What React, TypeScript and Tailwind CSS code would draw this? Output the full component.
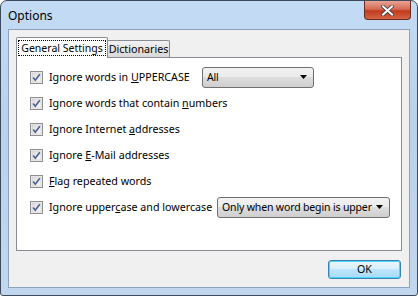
import React from 'react'

const font = { fontFamily: '"Noto Sans", "Open Sans", sans-serif' }

function Check() {
  return (
    <svg width="13" height="13" viewBox="0 0 13 13" className="shrink-0">
      <defs>
        <linearGradient id="cbg" x1="0" y1="0" x2="1" y2="1">
          <stop offset="0" stopColor="#dcdcdc" />
          <stop offset="1" stopColor="#f8f8f8" />
        </linearGradient>
      </defs>
      <rect x="0.5" y="0.5" width="12" height="12" fill="#f4f4f4" stroke="#8f8f8f" />
      <rect x="2" y="2" width="9" height="9" fill="url(#cbg)" stroke="#c8c8c8" strokeWidth="0.6" />
      <path d="M3.2 6.4 L5.3 9.2 L9.8 3.2" fill="none" stroke="#4a5f97" strokeWidth="1.6" />
    </svg>
  )
}

function Row({ children, w = '' }: { children: React.ReactNode; w?: string }) {
  return (
    <div className="flex items-center h-[26px]">
      <Check />
      <span className={`${w} ml-[6px] text-[10.7px] text-black leading-none whitespace-nowrap`}>{children}</span>
    </div>
  )
}

function Combo({ text, w }: { text: string; w: string }) {
  return (
    <div className={`${w} h-[21px] flex items-center justify-between rounded-[3px] border border-[#707070] bg-[linear-gradient(#f2f2f2,#ebebeb_45%,#dddddd_50%,#cfcfcf)] pl-[4px] pr-[6px]`}>
      <span className="text-[10.5px] tracking-[-0.15px] text-black leading-none whitespace-nowrap">{text}</span>
      <svg width="7" height="4" viewBox="0 0 7 4" className="shrink-0"><path d="M0 0 H7 L3.5 4 Z" fill="#000" /></svg>
    </div>
  )
}

export default function App() {
  return (
    <div className="w-[418px] h-[296px] bg-white" style={font}>
      <div className="w-full h-full flex flex-col rounded-t-[7px] rounded-b-[3px] border border-[#3c4a5c] bg-[linear-gradient(180deg,#c3dbf4,#b9d1ea_40%,#c1d7ee)] overflow-hidden">
        {/* Title bar */}
        <div className="h-[28px] flex items-start justify-between pl-[7px] pr-[6px] shrink-0">
          <span className="mt-[6px] text-[12px] text-black">Options</span>
          <div className="w-[47px] h-[19px] rounded-b-[4px] border border-[#6b2a22] border-t-0 bg-[linear-gradient(#e8a393,#d66c56_45%,#c13a1f_55%,#d36545)] flex items-center justify-center">
            <svg width="13" height="11" viewBox="0 0 13 11">
              <path d="M2 1.5 L11 9.5 M11 1.5 L2 9.5" stroke="#3b3b3b" strokeWidth="3.6" strokeLinecap="square" />
              <path d="M2 1.5 L11 9.5 M11 1.5 L2 9.5" stroke="#ffffff" strokeWidth="2" strokeLinecap="square" />
            </svg>
          </div>
        </div>
        {/* Client */}
        <div className="flex-1 mx-[7px] mb-[7px] border border-[#8da2bd] bg-[#f0f0f0] flex flex-col px-[7px] pt-[7px]">
          {/* Tabs */}
          <div className="flex items-end h-[20px] relative z-10">
            <div className="w-[92px] h-[21px] -mb-px flex items-center justify-center border border-[#898c95] border-b-0 bg-white rounded-t-[2px]">
              <span className="text-[10.5px] text-black leading-none border border-dotted border-black px-[2px] py-[2px]">General Settings</span>
            </div>
            <div className="w-[62px] h-[17px] flex items-center justify-center border border-[#898c95] border-l-0 border-b-0 bg-[linear-gradient(#f2f2f2,#e3e3e3_50%,#d9d9d9)] rounded-tr-[2px]">
              <span className="text-[10.7px] text-black leading-none">Dictionaries</span>
            </div>
          </div>
          {/* Panel */}
          <div className="h-[194px] border border-[#898c95] bg-white pl-[13px] pt-[6px]">
            <div className="flex items-center">
              <Row w="w-[153px]">Ignore words in <u>U</u>PPERCASE</Row>
              <Combo text="All" w="w-[112px]" />
            </div>
            <Row>Ignore words that contain <u>n</u>umbers</Row>
            <Row>Ignore Internet <u>a</u>ddresses</Row>
            <Row>Ignore <u>E</u>-Mail addresses</Row>
            <Row><u>F</u>lag repeated words</Row>
            <div className="flex items-center">
              <Row w="w-[168px]">Ignore upper<u>c</u>ase and lowercase</Row>
              <Combo text="Only when word begin is upper" w="w-[173px]" />
            </div>
          </div>
          {/* Buttons */}
          <div className="flex justify-end pt-[9px] pr-[1px]">
            <div className="w-[73px] h-[19px] rounded-[3px] border border-[#3c7fb1] shadow-[inset_0_0_0_1px_#48d8fb] bg-[linear-gradient(#eaf6fd,#d9f0fc_45%,#bee6fd_50%,#a7d9f5)] flex items-center justify-center">
              <span className="text-[10.7px] text-black leading-none">OK</span>
            </div>
          </div>
        </div>
      </div>
    </div>
  )
}
